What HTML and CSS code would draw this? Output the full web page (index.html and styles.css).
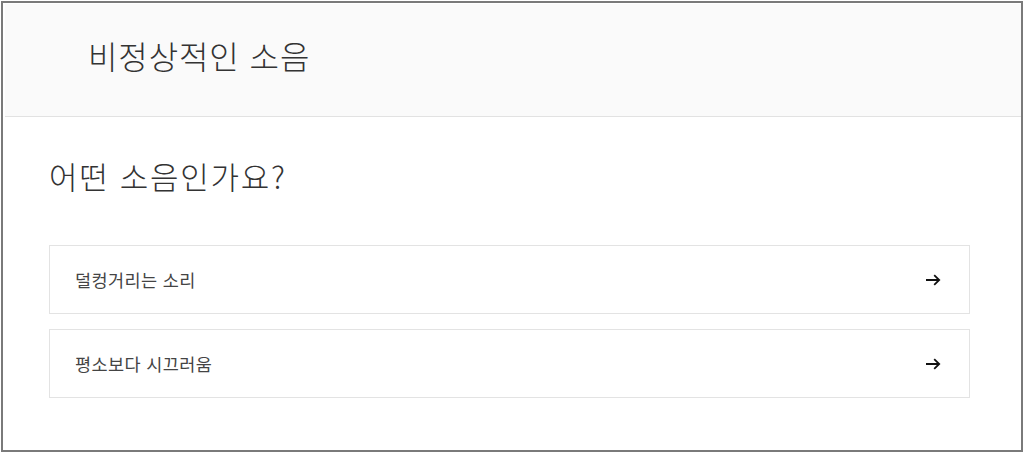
FILE: index.html
```html
<!DOCTYPE html>
<html lang="ko">
<head>
<meta charset="utf-8">
<title>비정상적인 소음</title>
<link rel="stylesheet" href="styles.css">
</head>
<body>
<div class="frame">
  <header class="header">
    <h1 class="title">비정상적인 소음</h1>
  </header>
  <main class="main">
    <h2 class="question">어떤 소음인가요?</h2>
    <ul class="options">
      <li class="option">
        <span class="option-label">덜컹거리는 소리</span>
        <svg class="arrow" width="16" height="12" viewBox="0 0 16 12" aria-hidden="true"><path d="M1 6H14.2M9.2 1.2L14.2 6L9.2 10.8" fill="none" stroke="#111" stroke-width="1.8"/></svg>
      </li>
      <li class="option">
        <span class="option-label">평소보다 시끄러움</span>
        <svg class="arrow" width="16" height="12" viewBox="0 0 16 12" aria-hidden="true"><path d="M1 6H14.2M9.2 1.2L14.2 6L9.2 10.8" fill="none" stroke="#111" stroke-width="1.8"/></svg>
      </li>
    </ul>
  </main>
</div>
</body>
</html>
```

FILE: styles.css
```css
* { box-sizing: border-box; }
html, body { margin: 0; padding: 0; background: #fff; }
body {
  font-family: "Noto Sans CJK KR", "Noto Sans", sans-serif;
  color: #333;
}
.frame {
  margin: 1px 0 0 1px;
  width: 1022px;
  height: 451px;
  border: 2px solid #7a7a7a;
  padding: 1px 0 0 2px;
  background: #fff;
}
.header {
  height: 113px;
  background: #fafafa;
  border-bottom: 1px solid #e2e2e2;
  display: flex;
  align-items: center;
  padding: 0 0 10px 83px;
}
.title {
  margin: 0;
  font-size: 32px;
  font-weight: 300;
  line-height: 1.2;
  color: #333;
  letter-spacing: 0.9px;
}
.main {
  padding: 40px 51px 0 44px;
}
.question {
  margin: 0 0 51px 0;
  font-size: 31px;
  font-weight: 300;
  line-height: 37px;
  color: #333;
  letter-spacing: 1.7px;
}
.options {
  list-style: none;
  margin: 0;
  padding: 0;
  display: flex;
  flex-direction: column;
  gap: 15px;
}
.option {
  height: 69px;
  border: 1px solid #e3e3e3;
  display: flex;
  align-items: center;
  justify-content: space-between;
  padding: 0 28px 0 25px;
}
.option-label {
  font-size: 17.5px;
  color: #444;
  line-height: 1.2;
  letter-spacing: 0.4px;
}
.arrow { display: block; }
```
